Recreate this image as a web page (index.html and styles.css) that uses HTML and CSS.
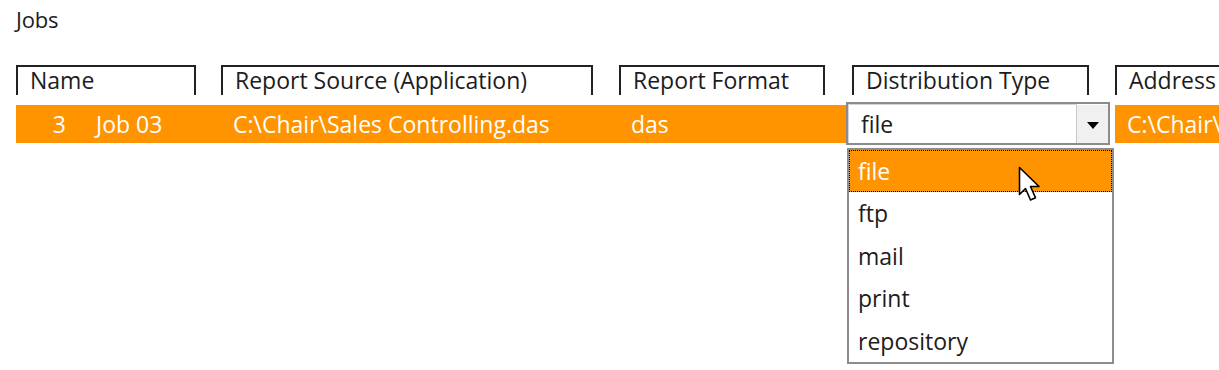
FILE: index.html
```html
<!DOCTYPE html>
<html lang="en">
<head>
    <meta charset="UTF-8">
    <title>Jobs</title>
    <link rel="stylesheet" href="styles.css">
</head>
<body>
    <div id="jobsPanel">
        <div class="panel-title">Jobs</div>

        <div class="grid-header">
            <div class="col-head col-name">Name</div>
            <div class="col-head col-source">Report Source (Application)</div>
            <div class="col-head col-format">Report Format</div>
            <div class="col-head col-dist">Distribution Type</div>
            <div class="col-head col-addr">Address</div>
        </div>

        <div class="grid-row selected">
            <div class="cell col-name"><span class="job-id">3</span><span>Job 03</span></div>
            <div class="cell col-source">C:\Chair\Sales Controlling.das</div>
            <div class="cell col-format">das</div>
            <div class="cell col-dist"></div>
            <div class="cell col-addr">C:\Chair\Reports</div>

            <div class="combo">
                <div class="combo-value">file</div>
                <div class="combo-button">
                    <svg width="12" height="7" viewBox="0 0 12 7"><path d="M0 0h12L6 7z" fill="#000"/></svg>
                </div>
            </div>

            <ul class="combo-list">
                <li class="active">file</li>
                <li>ftp</li>
                <li>mail</li>
                <li>print</li>
                <li>repository</li>
            </ul>

            <svg class="cursor" width="26" height="40" viewBox="0 0 26 40">
                <path d="M1.5 1.5v27l6-6 5 11.5 5-2.2-5-11.3h8.5z" fill="#fff" stroke="#000" stroke-width="1.6" stroke-linejoin="round"/>
            </svg>
        </div>
    </div>
</body>
</html>
```

FILE: styles.css
```css
body {
    margin: 0;
    font-family: 'Open Sans', 'Noto Sans', sans-serif;
    background-color: white;
    color: #1c1c1c;
}

#jobsPanel {
    padding: 4px 0 0 16px;
    min-height: 360px;
}

.panel-title {
    font-size: 22px;
    line-height: 30px;
    height: 61px;
    letter-spacing: -0.2px;
}

.grid-header {
    display: flex;
    height: 30px;
    white-space: nowrap;
}

.col-head {
    box-sizing: border-box;
    border: 2px solid #222;
    border-bottom: none;
    padding: 0 0 0 12px;
    font-size: 23px;
    line-height: 27px;
    overflow: hidden;
}

.col-name { width: 180px; margin-right: 25px; }
.col-source { width: 372px; margin-right: 26px; }
.col-format { width: 206px; margin-right: 27px; }
.col-dist { width: 237px; margin-right: 26px; }
.col-addr { flex: 1; border-right: none; }

.grid-row {
    position: relative;
    display: flex;
    margin-top: 10px;
    height: 38px;
    white-space: nowrap;
}

.grid-row.selected {
    background-color: #ff9400;
    color: white;
}

.cell {
    box-sizing: border-box;
    padding-left: 12px;
    font-size: 23px;
    line-height: 38px;
    overflow: hidden;
}

.job-id {
    display: inline-block;
    width: 38px;
    text-align: right;
    margin-right: 30px;
}

.combo {
    position: absolute;
    left: 830px;
    top: -3px;
    width: 264px;
    height: 43px;
    box-sizing: border-box;
    display: flex;
    background-color: white;
    border: 2px solid #8c8c8c;
    box-shadow: 5px 0 0 white;
}

.combo-value {
    flex: 1;
    color: #1c1c1c;
    font-size: 23px;
    line-height: 38px;
    padding-left: 12px;
    border-top: 1px solid #d4d4d4;
    border-left: 1px solid #d4d4d4;
}

.combo-button {
    width: 31px;
    display: flex;
    align-items: center;
    justify-content: center;
    background-color: #f0f0f0;
    border-left: 1px solid #c8c8c8;
    border-top: 1px solid #fff;
    padding-top: 2px;
}

.combo-list {
    position: absolute;
    left: 831px;
    top: 43px;
    width: 267px;
    margin: 0;
    padding: 0;
    list-style: none;
    box-sizing: border-box;
    border: 2px solid #8c8c8c;
    background-color: white;
    color: #1c1c1c;
}

.combo-list li {
    box-sizing: border-box;
    height: 42.4px;
    line-height: 40px;
    padding-left: 8px;
    font-size: 23px;
    border: 1px solid transparent;
}

.combo-list li.active {
    background-color: #ff9400;
    color: white;
    border: 1px dotted #000;
}

.cursor {
    position: absolute;
    left: 1002px;
    top: 61px;
}
```
